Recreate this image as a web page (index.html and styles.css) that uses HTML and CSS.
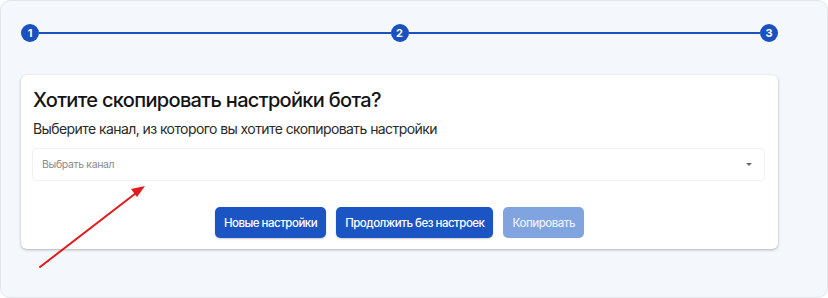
FILE: index.html
```html
<!DOCTYPE html>
<html lang="ru">
<head>
<meta charset="utf-8">
<link rel="stylesheet" href="styles.css">
</head>
<body>
<div class="panel">
  <div class="stepper">
    <span class="step">1</span>
    <span class="line"></span>
    <span class="step">2</span>
    <span class="line"></span>
    <span class="step">3</span>
  </div>
  <div class="card">
    <h1 class="title">Хотите скопировать настройки бота?</h1>
    <p class="subtitle">Выберите канал, из которого вы хотите скопировать настройки</p>
    <div class="select">
      <span class="placeholder">Выбрать канал</span>
      <span class="caret"></span>
    </div>
    <div class="actions">
      <button class="btn">Новые настройки</button>
      <button class="btn">Продолжить без настроек</button>
      <button class="btn btn-disabled" disabled>Копировать</button>
    </div>
  </div>
  <svg class="annot" width="828" height="298" viewBox="0 0 828 298">
    <line x1="40" y1="267" x2="138" y2="191.5" stroke="#e21b1b" stroke-width="2" stroke-linecap="round"/>
    <polygon points="145,186 131,189 137,197" fill="#e21b1b"/>
  </svg>
</div>
</body>
</html>
```

FILE: styles.css
```css
* { box-sizing: border-box; }
html, body { margin: 0; padding: 0; background: #ffffff; }
body { font-family: Inter, "Noto Sans", sans-serif; }

.panel {
  position: relative;
  width: 828px;
  height: 298px;
  border: 1px solid #e2e6eb;
  border-radius: 10px;
  background: #f4f8fc;
  padding: 23px 49px 0 20px;
}

.stepper {
  display: flex;
  align-items: center;
  height: 18px;
}
.step {
  width: 18px;
  height: 18px;
  border-radius: 50%;
  background: #1a51bf;
  color: #fff;
  font-size: 11px;
  font-weight: 700;
  display: flex;
  align-items: center;
  justify-content: center;
  flex: none;
}
.line {
  flex: 1;
  height: 2px;
  background: #1a51bf;
}

.card {
  margin-top: 33px;
  background: #fff;
  border-radius: 6px;
  box-shadow: 0 1px 3px rgba(0,0,0,0.28), 0 0 1px rgba(0,0,0,0.08);
  padding: 12px 12px 11px 12px;
}
.title {
  margin: 0;
  font-size: 20px;
  line-height: 26px;
  font-weight: 500;
  color: #141414;
  letter-spacing: -0.68px;
}
.subtitle {
  margin: 6px 0 0 0;
  font-size: 14px;
  line-height: 20px;
  color: #2a2a2a;
  letter-spacing: -0.58px;
}
.select {
  margin-top: 9px;
  height: 33px;
  border: 1px solid #f0f1f3;
  border-radius: 4px;
  display: flex;
  align-items: center;
  justify-content: space-between;
  padding: 0 12px 0 9px;
  margin-right: 1px;
  margin-left: -1px;
}
.placeholder {
  font-size: 10.5px;
  color: #8a8a8a;
  letter-spacing: -0.35px;
}
.caret {
  width: 0;
  height: 0;
  border-left: 3.5px solid transparent;
  border-right: 3.5px solid transparent;
  border-top: 3.5px solid #6b6b6b;
}

.actions {
  margin-top: 26px;
  display: flex;
  justify-content: center;
  gap: 10px;
}
.btn {
  font-family: Inter, "Noto Sans", sans-serif;
  height: 31px;
  padding: 0 9px;
  border: none;
  border-radius: 5px;
  background: #1a55c3;
  color: #fff;
  font-size: 11.5px;
  font-weight: 500;
  letter-spacing: -0.5px;
  box-shadow: 0 1px 2px rgba(0,0,0,0.2);
}
.btn-disabled {
  background: #7fa4e0;
  color: #eaf1fb;
  box-shadow: none;
}

.annot {
  position: absolute;
  left: -1px;
  top: -1px;
  pointer-events: none;
}
```
